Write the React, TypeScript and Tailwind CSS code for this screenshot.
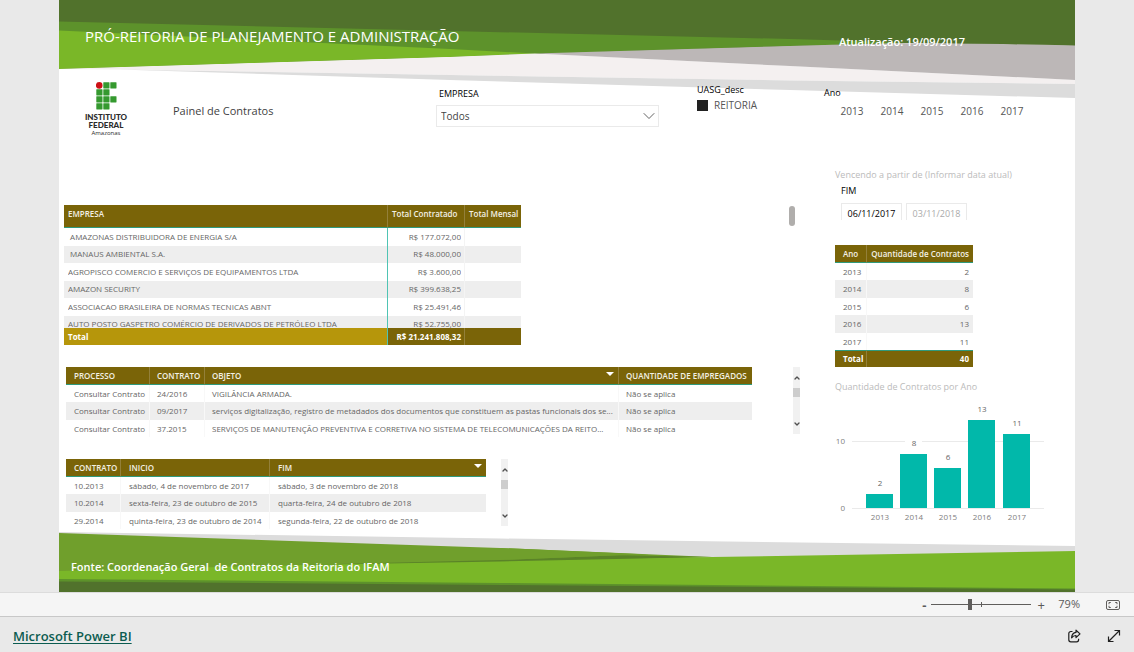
import { ReactNode } from "react";
import { ChevronDown, ChevronUp } from "lucide-react";

const YEARS = ["2013", "2014", "2015", "2016", "2017"];

const COMPANIES = [
  { name: "\u00a0AMAZONAS DISTRIBUIDORA DE ENERGIA S/A", total: "R$ 177.072,00" },
  { name: "\u00a0MANAUS AMBIENTAL S.A.", total: "R$ 48.000,00" },
  { name: "AGROPISCO COMERCIO E SERVIÇOS DE EQUIPAMENTOS LTDA", total: "R$ 3.600,00" },
  { name: "AMAZON SECURITY", total: "R$ 399.638,25" },
  { name: "ASSOCIACAO BRASILEIRA DE NORMAS TECNICAS ABNT", total: "R$ 25.491,46" },
  { name: "AUTO POSTO GASPETRO COMÉRCIO DE DERIVADOS DE PETRÓLEO LTDA", total: "R$ 52.755,00" },
];

const CONTRACTS = [
  { number: "24/2016", subject: "VIGILÂNCIA ARMADA." },
  {
    number: "09/2017",
    subject:
      "serviços digitalização, registro de metadados dos documentos que constituem as pastas funcionais dos se...",
  },
  {
    number: "37.2015",
    subject:
      "SERVIÇOS DE MANUTENÇÃO PREVENTIVA E CORRETIVA NO SISTEMA DE TELECOMUNICAÇÕES DA REITO...",
  },
];

const PERIODS = [
  { number: "10.2013", start: "sábado, 4 de novembro de 2017", end: "sábado, 3 de novembro de 2018" },
  { number: "10.2014", start: "sexta-feira, 23 de outubro de 2015", end: "quarta-feira, 24 de outubro de 2018" },
  { number: "29.2014", start: "quinta-feira, 23 de outubro de 2014", end: "segunda-feira, 22 de outubro de 2018" },
];

const COUNTS = [
  { year: "2013", count: 2, x: 31, top: 94 },
  { year: "2014", count: 8, x: 65, top: 54 },
  { year: "2015", count: 6, x: 99, top: 68 },
  { year: "2016", count: 13, x: 133, top: 20 },
  { year: "2017", count: 11, x: 168, top: 34 },
];

function TopArt() {
  return (
    <svg viewBox="0 0 1016 100" preserveAspectRatio="none" className="block h-[100px] w-full" aria-hidden="true">
      <path d="M0 0H1016V46L850 43L480 54L0 69Z" fill="#51722c" />
      <path d="M0 21.5L371 30.5L731 39L800 41L850 43L731 46L476 54L0 69Z" fill="#5d922b" />
      <path d="M0 30.5L391 49L476 53.5L391 57L0 69Z" fill="#7ab728" />
      <path d="M0 69L391 57L476 53.5L731 66L1016 80V84L731 80.5L391 75L100 70Z" fill="#f4f0f0" />
      <path d="M476 53.5L731 46Q790 44 830 43.4Q900 43 1016 45.5V80L731 66Z" fill="#bcb7b7" />
      <path d="M60 69.5L391 75L731 80.5L1016 84V98L731 90L391 80Z" fill="#dcdcdc" />
    </svg>
  );
}

function BottomArt() {
  return (
    <svg viewBox="0 0 1016 60" preserveAspectRatio="none" className="block h-[60px] w-full" aria-hidden="true">
      <path d="M0 0L441 6.5L1016 14V30H0Z" fill="#dcdcdc" />
      <path d="M0 1L441 16L653 25L441 31L0 41Z" fill="#709f2c" />
      <path d="M200 34L441 28L560 23.2L653 25L441 31Z" fill="#5a8328" />
      <path d="M441 16L441 28L560 23.2L590 22.4Z" fill="#709f2c" />
      <path d="M0 39L241 33L441 29.5L653 25L1016 19V60H0Z" fill="#7ab728" />
      <path d="M0 47L441 51L1016 56.5V60H0Z" fill="#5d922b" />
      <path d="M0 49.5L441 53L1016 57.5V60H0Z" fill="#51722c" />
    </svg>
  );
}

function Logo() {
  const squares = [
    [7, 0], [14, 0],
    [0, 7], [7, 7],
    [0, 14], [7, 14], [14, 14],
    [0, 21], [7, 21],
  ];

  return (
    <div className="flex w-11 flex-col items-center text-[#2b2b2b]">
      <svg viewBox="0 0 21 28" className="h-7 w-[21px]" aria-hidden="true">
        <circle cx="3.2" cy="3.4" r="3.3" fill="#cc1016" />
        {squares.map(([x, y]) => (
          <rect key={`${x}-${y}`} x={x + 0.3} y={y + 0.3} width="6.2" height="6.2" rx="0.4" fill="#35992f" />
        ))}
      </svg>
      <p className="mt-[3px] text-center font-[Lato] text-[8px] leading-[8px] font-black">
        INSTITUTO
        <br />
        FEDERAL
      </p>
      <p className="text-[6px] leading-[8px]">Amazonas</p>
    </div>
  );
}

function HeadCell({ children, className = "pl-[7px]" }: { children?: ReactNode; className?: string }) {
  return (
    <th
      scope="col"
      className={`border-r border-b border-r-[#93803a] border-b-[#2f9a7c] bg-[#7a6408] py-0 text-left font-semibold whitespace-nowrap text-[#f3f0e4] last:border-r-0 ${className}`}
    >
      {children}
    </th>
  );
}

function ScrollTrack({ label }: { label: string }) {
  return (
    <div className="flex h-[67px] w-[7px] shrink-0 flex-col items-center bg-[#f1f1f1] text-[#505050]">
      <button type="button" aria-label={`${label}: subir`} className="flex h-[21px] items-center">
        <ChevronUp size={8} strokeWidth={4} />
      </button>
      <div className="h-[9px] w-full bg-[#cdcdcd]" />
      <button type="button" aria-label={`${label}: descer`} className="mt-auto flex h-[21px] items-center">
        <ChevronDown size={8} strokeWidth={4} />
      </button>
    </div>
  );
}

function SortMark() {
  return (
    <svg viewBox="0 0 8 4" className="mb-1 h-1 w-2 shrink-0" aria-hidden="true">
      <path d="M0 0H8L4 4Z" fill="#fff" />
    </svg>
  );
}

function Filters() {
  return (
    <div className="flex h-[90px] items-start pl-[25px]">
      <div className="pt-1">
        <Logo />
      </div>
      <h2 className="ml-[45px] w-[263px] pt-6 text-[11px] leading-[18px] text-[#3f3f3f]">Painel de Contratos</h2>

      <div className="w-[223px]">
        <label htmlFor="empresa" className="block pt-[9px] pl-[3px] text-[9px] leading-[14px] text-black">
          EMPRESA
        </label>
        <div className="mt-1 grid items-center">
          <select
            id="empresa"
            className="col-start-1 row-start-1 h-[22px] appearance-none border border-[#eaeaea] bg-white px-1 pt-px text-[10px] text-[#444]"
          >
            <option>Todos</option>
          </select>
          <ChevronDown
            size={20}
            strokeWidth={1}
            className="pointer-events-none col-start-1 row-start-1 justify-self-end text-[#444]"
          />
        </div>
      </div>

      <div role="group" aria-label="UASG_desc" className="ml-[38px] w-[127px] pt-1 text-black">
        <p className="text-[9px] leading-[15px]">UASG_desc</p>
        <label className="flex items-center gap-[6px] text-[10px] leading-[17px] text-[#555]">
          <input type="checkbox" defaultChecked className="h-[11px] w-[11px] appearance-none bg-[#212121]" />
          REITORIA
        </label>
      </div>

      <div role="group" aria-label="Ano" className="pt-[7px]">
        <p className="text-[9px] leading-[15px] text-black">Ano</p>
        <div className="mt-[3px] flex pl-2">
          {YEARS.map((year) => (
            <button key={year} type="button" className="w-10 text-[10px] leading-[16px] text-[#555]">
              {year}
            </button>
          ))}
        </div>
      </div>
    </div>
  );
}

function CompanyTable() {
  return (
    <div className="flex items-start justify-between pr-[5px]">
      <table className="w-[457px] table-fixed border-separate border-spacing-0 text-[8px] text-[#666]">
        <colgroup>
          <col className="w-[324px]" />
          <col className="w-[77px]" />
          <col />
        </colgroup>
        <thead>
          <tr className="h-[23px]">
            <HeadCell className="pb-1 pl-[4px]">EMPRESA</HeadCell>
            <HeadCell className="pb-1 pl-[4px]">Total Contratado</HeadCell>
            <HeadCell className="pb-1 pl-[4px]">Total Mensal</HeadCell>
          </tr>
        </thead>
        <tbody>
          {COMPANIES.map((company) => (
            <tr key={company.name} className="group even:bg-[#eeeeee]">
              <td className="border-r border-[#4fc4b4] p-0 pl-[4px]">
                <div className="h-[18px] overflow-hidden leading-[18px] whitespace-nowrap group-even:h-[17px] group-even:leading-[16px] group-last:h-[12px]!">
                  {company.name}
                </div>
              </td>
              <td className="border-r border-[#f4f4f4] p-0 pr-[3px] text-right">
                <div className="h-[18px] overflow-hidden leading-[18px] group-even:h-[17px] group-even:leading-[16px] group-last:h-[12px]!">
                  {company.total}
                </div>
              </td>
              <td className="p-0" />
            </tr>
          ))}
        </tbody>
        <tfoot>
          <tr className="h-[17px] font-bold text-white">
            <td className="border-r border-[#4fc4b4] bg-[#b6960b] p-0 pl-[4px]">Total</td>
            <td className="border-r border-[#93803a] bg-[#7a6408] p-0 pr-[3px] text-right">R$ 21.241.808,32</td>
            <td className="bg-[#7a6408] p-0" />
          </tr>
        </tfoot>
      </table>
      <div className="mt-px h-5 w-[6px] rounded-full bg-[#b0aeac]" />
    </div>
  );
}

function ContractTable() {
  return (
    <div className="flex items-start justify-between pl-[2px]">
      <table className="w-[686px] table-fixed border-separate border-spacing-0 text-[8px] text-[#666]">
        <colgroup>
          <col className="w-[84px]" />
          <col className="w-[55px]" />
          <col className="w-[414px]" />
          <col />
        </colgroup>
        <thead>
          <tr className="h-[18px]">
            <HeadCell className="pl-2">PROCESSO</HeadCell>
            <HeadCell>CONTRATO</HeadCell>
            <HeadCell className="pr-1 pl-[7px]">
              <span className="flex items-center justify-between">
                OBJETO
                <SortMark />
              </span>
            </HeadCell>
            <HeadCell>QUANTIDADE DE EMPREGADOS</HeadCell>
          </tr>
        </thead>
        <tbody>
          {CONTRACTS.map((contract) => (
            <tr key={contract.number} className="h-[17px] whitespace-nowrap even:h-[18px] even:bg-[#eeeeee]">
              <td className="border-r border-[#f8f8f8] p-0 pl-2">Consultar Contrato</td>
              <td className="border-r border-[#f8f8f8] p-0 pl-[7px]">{contract.number}</td>
              <td className="border-r border-[#f8f8f8] p-0 pl-[7px]">{contract.subject}</td>
              <td className="p-0 pl-[7px]">Não se aplica</td>
            </tr>
          ))}
        </tbody>
      </table>
      <ScrollTrack label="Contratos" />
    </div>
  );
}

function PeriodTable() {
  return (
    <div className="flex items-start gap-[15px] pl-[2px]">
      <table className="w-[420px] table-fixed border-separate border-spacing-0 text-[8px] text-[#666]">
        <colgroup>
          <col className="w-[55px]" />
          <col className="w-[149px]" />
          <col />
        </colgroup>
        <thead>
          <tr className="h-[18px]">
            <HeadCell className="pl-2">CONTRATO</HeadCell>
            <HeadCell className="pl-2">INICIO</HeadCell>
            <HeadCell className="pr-1 pl-2">
              <span className="flex items-center justify-between">
                FIM
                <SortMark />
              </span>
            </HeadCell>
          </tr>
        </thead>
        <tbody>
          {PERIODS.map((period) => (
            <tr key={period.number} className="h-[17px] whitespace-nowrap even:h-[18px] even:bg-[#eeeeee]">
              <td className="border-r border-[#f8f8f8] p-0 pl-2">{period.number}</td>
              <td className="border-r border-[#f8f8f8] p-0 pl-2">{period.start}</td>
              <td className="p-0 pl-2">{period.end}</td>
            </tr>
          ))}
        </tbody>
      </table>
      <ScrollTrack label="Vigências" />
    </div>
  );
}

function DateFilter() {
  return (
    <div className="h-[77px]">
      <h3 className="text-[9px] leading-[14px] text-[#bbb]">Vencendo a partir de (Informar data atual)</h3>
      <div role="group" aria-label="FIM" className="pt-[2px] pl-[6px]">
        <p className="text-[9px] leading-[14px] text-black">FIM</p>
        <div className="flex gap-1 pt-[5px]">
          <input
            type="text"
            aria-label="Data inicial"
            defaultValue="06/11/2017"
            className="h-[17px] w-[61px] border border-b-0 border-[#eaeaea] px-0 pt-[3px] text-center text-[9px] text-black"
          />
          <input
            type="text"
            aria-label="Data final"
            defaultValue="03/11/2018"
            className="h-[17px] w-[61px] border border-b-0 border-[#eaeaea] px-0 pt-[3px] text-center text-[9px] text-[#aaa]"
          />
        </div>
      </div>
    </div>
  );
}

function YearTable() {
  return (
    <table className="w-[138px] table-fixed border-separate border-spacing-0 text-[8px] text-[#666]">
      <colgroup>
        <col className="w-8" />
        <col />
      </colgroup>
      <thead>
        <tr className="h-[18px]">
          <HeadCell className="pl-2">Ano</HeadCell>
          <th
            scope="col"
            className="border-b border-[#2f9a7c] bg-[#7a6408] p-0 pr-1 text-right font-semibold whitespace-nowrap text-[#f3f0e4]"
          >
            Quantidade de Contratos
          </th>
        </tr>
      </thead>
      <tbody>
        {COUNTS.map((row) => (
          <tr key={row.year} className="h-[17px] even:h-[18px] even:bg-[#eeeeee]">
            <td className="border-r border-[#f8f8f8] p-0 pl-2">{row.year}</td>
            <td className="p-0 pr-1 text-right">{row.count}</td>
          </tr>
        ))}
      </tbody>
      <tfoot>
        <tr className="h-[17px] bg-[#7a6408] font-bold text-white">
          <td className="border-t border-r border-t-[#2f9a7c] border-r-[#93803a] p-0 pl-2">Total</td>
          <td className="border-t border-[#2f9a7c] p-0 pr-1 text-right">40</td>
        </tr>
      </tfoot>
    </table>
  );
}

function YearChart() {
  return (
    <section>
      <h3 className="text-[9px] leading-[14px] text-[#bbb]">Quantidade de Contratos por Ano</h3>
      <svg
        viewBox="0 0 210 126"
        className="mt-[6px] block h-[126px] w-[210px] text-[8px]"
        role="img"
        aria-label="Quantidade de Contratos por Ano"
      >
        <path d="M17 41.5H209M17 108.5H209" stroke="#eaeaea" />
        <text x="10" y="44" textAnchor="end" fill="#808080">10</text>
        <text x="10" y="111" textAnchor="end" fill="#808080">0</text>
        {COUNTS.map((bar) => (
          <g key={bar.year} textAnchor="middle">
            <rect x={bar.x + 5} y={bar.top - 17} width="17" height="12" fill="#fff" />
            <rect x={bar.x} y={bar.top} width="27" height={108 - bar.top} fill="#01b8aa" />
            <text x={bar.x + 14} y={bar.top - 8} fill="#666">{bar.count}</text>
            <text x={bar.x + 14} y="120" fill="#808080">{bar.year}</text>
          </g>
        ))}
      </svg>
    </section>
  );
}

function ZoomBar() {
  return (
    <div className="flex h-[24px] items-center justify-end border-t border-[#dcdcdc] bg-[#f5f5f5] pr-[14px] text-[#5a5a5a]">
      <button type="button" aria-label="Reduzir" className="w-[14px] text-[13px] leading-4 font-bold">
        -
      </button>
      <div className="grid w-[100px] items-center">
        <div className="col-start-1 row-start-1 h-[5px] w-px justify-self-center bg-[#605e5c]" />
        <input
          type="range"
          aria-label="Zoom"
          defaultValue="38"
          className="col-start-1 row-start-1 h-[11px] w-full appearance-none bg-[linear-gradient(#605e5c,#605e5c)] bg-[length:100%_1px] bg-center bg-no-repeat [&::-webkit-slider-thumb]:h-[11px] [&::-webkit-slider-thumb]:w-1 [&::-webkit-slider-thumb]:appearance-none [&::-webkit-slider-thumb]:bg-[#605e5c]"
        />
      </div>
      <button type="button" aria-label="Ampliar" className="w-5 text-[13px] leading-4">
        +
      </button>
      <span className="ml-[7px] text-[11px]">79%</span>
      <button type="button" aria-label="Ajustar à página" className="ml-[26px]">
        <svg viewBox="0 0 14 12" className="h-3 w-[14px]" fill="none" stroke="#605e5c">
          <rect x="0.5" y="1.5" width="13" height="9" rx="1.5" />
          <path d="M3 5.200V3.500H4.800M9.200 3.500H11V5.200M3 6.800V8.500H4.800M9.200 8.500H11V6.800" />
        </svg>
      </button>
    </div>
  );
}

function EmbedFooter() {
  return (
    <footer className="flex h-9 items-center border-t border-[#c8c8c8] bg-[#e9e9e9] pr-[13px] pl-[13px]">
      <a href="#powerbi" className="pt-1 text-[13px] font-semibold text-[#0c5c50] underline underline-offset-2">
        Microsoft Power BI
      </a>
      <button type="button" aria-label="Compartilhar" className="ml-auto pt-[2px]">
        <svg viewBox="0 0 14 14" className="h-[14px] w-[14px]" fill="none" stroke="#1f1f1f" strokeWidth="1.2" strokeLinejoin="round">
          <path d="M5.5 2.500H3.800A2 2 0 0 0 1.800 4.500V10.800A2 2 0 0 0 3.800 12.800H9.600A2 2 0 0 0 11.600 10.800V9.800" />
          <path d="M9 1.200L13 4.900L9 8.600V6.500C7 6.400 5.800 7.200 4.600 8.800C4.800 5.600 6.400 3.700 9 3.400Z" />
        </svg>
      </button>
      <button type="button" aria-label="Tela inteira" className="ml-[26px] pt-[3px]">
        <svg viewBox="0 0 14 14" className="h-[14px] w-[14px]" fill="none" stroke="#1f1f1f" strokeWidth="1.2">
          <path d="M2 12L12 2M7.500 1.500H12.500V6.500M1.500 7.500V12.500H6.500" />
        </svg>
      </button>
    </footer>
  );
}

export default function App() {
  return (
    <div className="flex min-h-screen flex-col bg-[#e9e9e9] font-['Open_Sans',sans-serif]">
      <main className="mx-[59px] grid flex-1 bg-white">
        <div className="col-start-1 row-start-1 flex flex-col justify-between">
          <TopArt />
          <BottomArt />
        </div>

        <div className="col-start-1 row-start-1 flex flex-col">
          <header className="flex h-[78px] items-start pr-[110px] pl-[26px] text-white">
            <h1 className="pt-6 text-[15px] leading-6 font-medium">PRÓ-REITORIA DE PLANEJAMENTO E ADMINISTRAÇÃO</h1>
            <p className="ml-auto pt-8 text-[11px] leading-5 font-semibold">Atualização: 19/09/2017</p>
          </header>

          <Filters />

          <div className="flex justify-between pr-[30px] pl-[5px]">
            <div className="flex w-[736px] flex-col gap-[22px] pt-[37px]">
              <CompanyTable />
              <ContractTable />
              <PeriodTable />
            </div>
            <div className="flex w-[210px] flex-col">
              <DateFilter />
              <YearTable />
              <div className="pt-[13px]">
                <YearChart />
              </div>
            </div>
          </div>

          <p className="mt-auto pb-[13px] pl-3 text-[11px] leading-6 font-semibold text-white">
            Fonte: Coordenação Geral{"\u00a0 "}de Contratos da Reitoria do IFAM
          </p>
        </div>
      </main>
      <ZoomBar />
      <EmbedFooter />
    </div>
  );
}
